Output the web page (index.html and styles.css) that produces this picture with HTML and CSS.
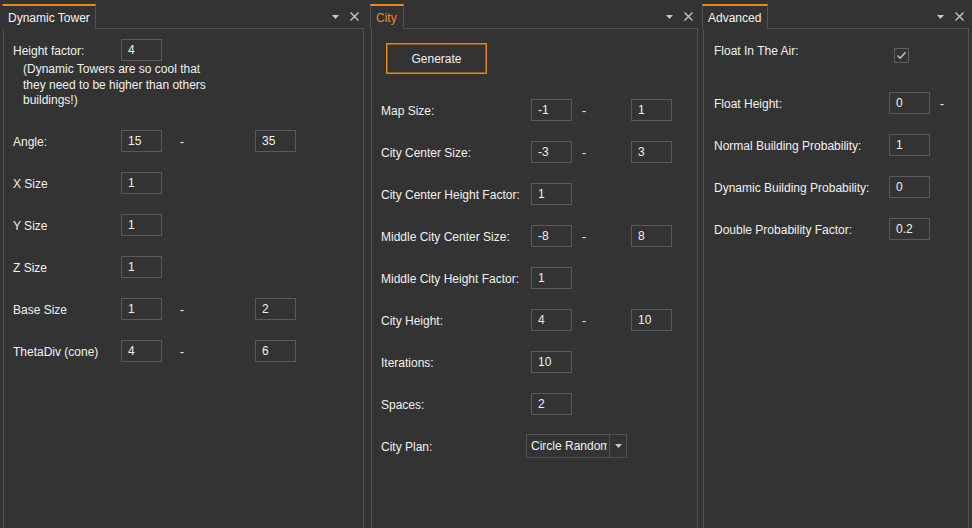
FILE: index.html
```html
<!DOCTYPE html>
<html>
<head>
<meta charset="utf-8">
<title>City Generator</title>
<link rel="stylesheet" href="styles.css">
</head>
<body>
<div class="dock">
  <section class="panel panel-tower">
    <header class="panel-head">
      <div class="tab tab-first tab-tower">Dynamic Tower</div>
      <div class="head-rest">
        <svg class="ico-drop" width="7" height="4" viewBox="0 0 7 4"><polygon points="0,0 7,0 3.5,4"/></svg>
        <svg class="ico-close" width="9" height="9" viewBox="0 0 9 9"><path d="M0.5 0.5L8.5 8.5M8.5 0.5L0.5 8.5"/></svg>
      </div>
    </header>
    <div class="pane pane-tower">
      <div class="row row-tight"><span class="lbl">Height factor:</span><span class="field">4</span></div>
      <p class="note">(Dynamic Towers are so cool that<br>they need to be higher than others<br>buildings!)</p>
      <div class="row"><span class="lbl">Angle:</span><span class="field">15</span><span class="dash">-</span><span class="field">35</span></div>
      <div class="row"><span class="lbl">X Size</span><span class="field">1</span></div>
      <div class="row"><span class="lbl">Y Size</span><span class="field">1</span></div>
      <div class="row"><span class="lbl">Z Size</span><span class="field">1</span></div>
      <div class="row"><span class="lbl">Base Size</span><span class="field">1</span><span class="dash">-</span><span class="field">2</span></div>
      <div class="row"><span class="lbl">ThetaDiv (cone)</span><span class="field">4</span><span class="dash">-</span><span class="field">6</span></div>
    </div>
  </section>

  <section class="panel panel-city">
    <header class="panel-head">
      <div class="tab tab-city tab-active">City</div>
      <div class="head-rest">
        <svg class="ico-drop" width="7" height="4" viewBox="0 0 7 4"><polygon points="0,0 7,0 3.5,4"/></svg>
        <svg class="ico-close" width="9" height="9" viewBox="0 0 9 9"><path d="M0.5 0.5L8.5 8.5M8.5 0.5L0.5 8.5"/></svg>
      </div>
    </header>
    <div class="pane pane-city">
      <button class="btn-generate" type="button">Generate</button>
      <div class="row"><span class="lbl">Map Size:</span><span class="field">-1</span><span class="dash">-</span><span class="field">1</span></div>
      <div class="row"><span class="lbl">City Center Size:</span><span class="field">-3</span><span class="dash">-</span><span class="field">3</span></div>
      <div class="row"><span class="lbl">City Center Height Factor:</span><span class="field">1</span></div>
      <div class="row"><span class="lbl">Middle City Center Size:</span><span class="field">-8</span><span class="dash">-</span><span class="field">8</span></div>
      <div class="row"><span class="lbl">Middle City Height Factor:</span><span class="field">1</span></div>
      <div class="row"><span class="lbl">City Height:</span><span class="field">4</span><span class="dash">-</span><span class="field">10</span></div>
      <div class="row"><span class="lbl">Iterations:</span><span class="field">10</span></div>
      <div class="row"><span class="lbl">Spaces:</span><span class="field">2</span></div>
      <div class="row"><span class="lbl">City Plan:</span>
        <div class="combo"><span class="combo-text">Circle Random</span><span class="combo-btn"><svg class="ico-drop" width="7" height="4" viewBox="0 0 7 4"><polygon points="0,0 7,0 3.5,4"/></svg></span></div>
      </div>
    </div>
  </section>

  <section class="panel panel-adv">
    <header class="panel-head">
      <div class="tab tab-adv">Advanced</div>
      <div class="head-rest">
        <svg class="ico-drop" width="7" height="4" viewBox="0 0 7 4"><polygon points="0,0 7,0 3.5,4"/></svg>
        <svg class="ico-close" width="9" height="9" viewBox="0 0 9 9"><path d="M0.5 0.5L8.5 8.5M8.5 0.5L0.5 8.5"/></svg>
      </div>
    </header>
    <div class="pane pane-adv">
      <div class="row row-first"><span class="lbl">Float In The Air:</span>
        <span class="check"><svg width="13" height="13" viewBox="0 0 13 13"><path d="M2.5 6.5L5.2 9.3L10.5 3.3"/></svg></span>
      </div>
      <div class="row"><span class="lbl">Float Height:</span><span class="field">0</span><span class="dash">-</span></div>
      <div class="row"><span class="lbl">Normal Building Probability:</span><span class="field">1</span></div>
      <div class="row"><span class="lbl">Dynamic Building Probability:</span><span class="field">0</span></div>
      <div class="row"><span class="lbl">Double Probability Factor:</span><span class="field">0.2</span></div>
    </div>
  </section>
</div>
</body>
</html>
```

FILE: styles.css
```css
html, body {
  margin: 0;
  height: 100%;
}

body {
  background: #333333;
  color: #f1f1f1;
  font-family: "Liberation Sans", Arial, sans-serif;
  font-size: 12px;
  overflow: hidden;
}

.dock {
  display: flex;
  height: 528px;
  padding-left: 3px;
}

.panel {
  display: flex;
  flex-direction: column;
  box-sizing: border-box;
}

.panel-tower { width: 361px; }
.panel-city { width: 327px; margin-left: 7px; }
.panel-adv { width: 266px; margin-left: 5px; }

.panel-head {
  display: flex;
  height: 25px;
  margin-top: 4px;
}

.tab {
  box-sizing: border-box;
  height: 25px;
  margin-left: -1px;
  padding: 1px 0 0 5px;
  border-top: 2px solid #ef8a17;
  border-left: 1px solid #525252;
  border-right: 1px solid #525252;
  line-height: 22px;
  white-space: nowrap;
  color: #f4f4f4;
}

.tab-first { border-left-color: transparent; }
.tab-tower { width: 94px; }
.tab-city { width: 34px; }
.tab-adv { width: 66px; }
.tab-active { color: #ef8a17; }

.head-rest {
  flex: 1;
  display: flex;
  align-items: center;
  justify-content: flex-end;
  gap: 11px;
  padding: 1px 5px 0 0;
  border-bottom: 1px solid #525252;
}

.ico-drop { display: block; fill: #c8c8c8; }
.ico-close { display: block; stroke: #c8c8c8; stroke-width: 1.3; fill: none; }

.pane {
  flex: 1;
  box-sizing: border-box;
  border-left: 1px solid #525252;
  border-right: 1px solid #525252;
}

.pane-tower { padding: 10px 0 0 9px; }
.pane-city { padding: 14px 0 0 9px; }
.pane-adv { padding: 10px 0 0 10px; }

.row {
  display: flex;
  align-items: center;
  height: 22px;
  margin-bottom: 20px;
  white-space: nowrap;
}

.row-tight { margin-bottom: 1px; }
.row-first { margin-bottom: 31px; }

.lbl { flex: none; padding-top: 2px; box-sizing: border-box; }
.pane-tower .lbl { width: 108px; }
.pane-city .lbl { width: 150px; }
.pane-adv .lbl { width: 175px; }

.field {
  box-sizing: border-box;
  flex: none;
  width: 41px;
  height: 22px;
  padding-left: 6px;
  border: 1px solid #5a5a5a;
  line-height: 21px;
}

.dash { flex: none; box-sizing: border-box; padding-top: 2px; }
.pane-tower .dash { width: 93px; padding-left: 18px; }
.pane-city .dash { width: 59px; padding-left: 10px; }
.pane-adv .dash { padding-left: 10px; }

.note {
  margin: 0 0 21.5px 10px;
  line-height: 15.5px;
  white-space: nowrap;
}

.btn-generate {
  display: block;
  box-sizing: border-box;
  width: 101px;
  height: 31px;
  margin: 0 0 25px 5px;
  padding: 0;
  background: #333333;
  color: #f1f1f1;
  font: inherit;
  border: 1px solid #e8861d;
  box-shadow: inset 0 0 0 1px #8f5e26;
}

.combo {
  display: flex;
  box-sizing: border-box;
  width: 101px;
  height: 24px;
  margin-left: -5px;
  border: 1px solid #525252;
}

.combo-text {
  box-sizing: border-box;
  width: 80px;
  padding-left: 4px;
  margin-right: 2px;
  overflow: hidden;
  white-space: nowrap;
  line-height: 23px;
}

.combo-btn {
  flex: 1;
  display: flex;
  align-items: center;
  justify-content: center;
  border-left: 1px solid #525252;
}

.check {
  box-sizing: border-box;
  align-self: flex-start;
  width: 15px;
  height: 15px;
  margin: 9px 0 0 5px;
  border: 1px solid #5e5e5e;
}

.check svg {
  display: block;
  fill: none;
  stroke: #c8c8c8;
  stroke-width: 1.4;
}
```
